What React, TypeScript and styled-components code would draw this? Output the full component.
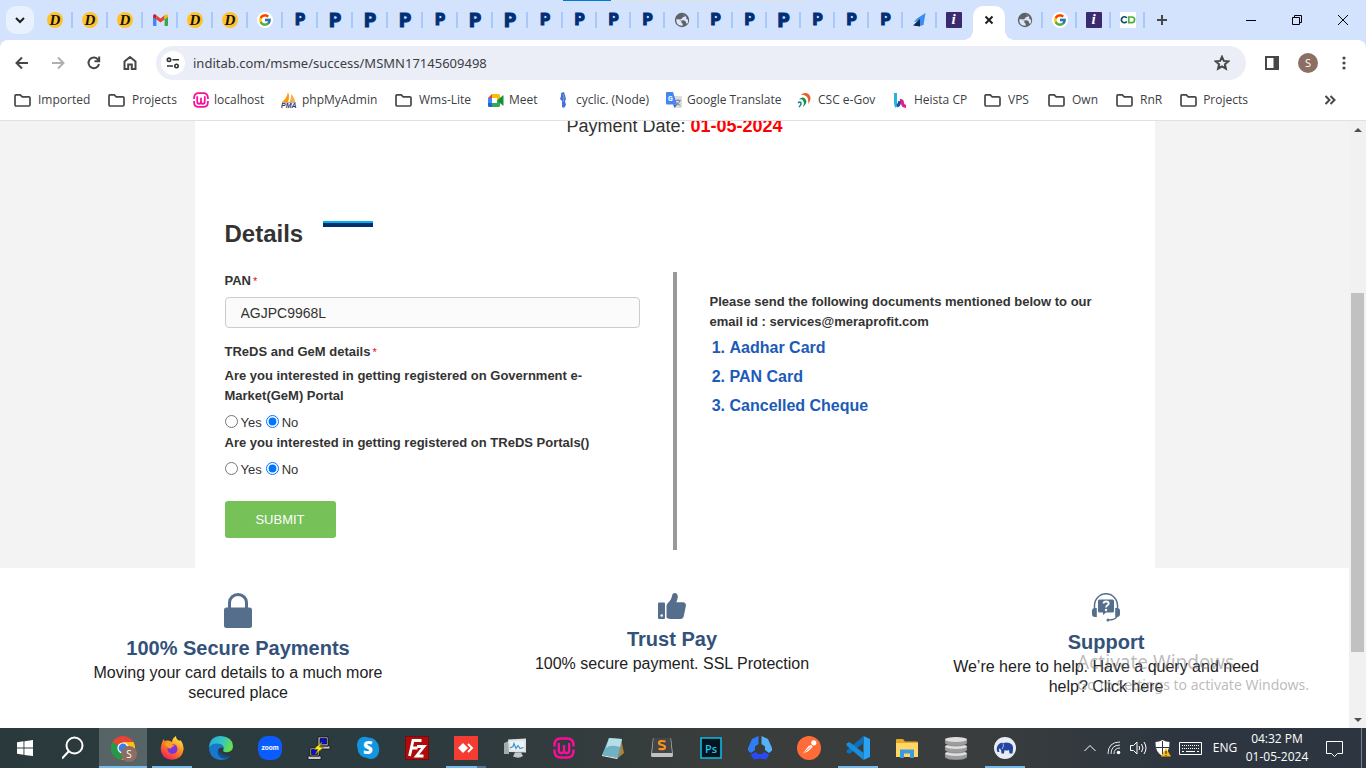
import React from "react";
import styled, { createGlobalStyle, css } from "styled-components";
import { FcGoogle } from "react-icons/fc";

const ui = `"Open Sans", "Noto Sans", sans-serif`;
const uiWide = `"Noto Sans", "Open Sans", sans-serif`;
const arial = `"Liberation Sans", Arial, sans-serif`;

const GlobalStyle = createGlobalStyle`
  *, *::before, *::after { box-sizing: border-box; }
  body { margin: 0; font-family: ${arial}; color: #333; background: #fff; }
  button { border: 0; padding: 0; background: none; font: inherit; color: inherit; }
  a { color: inherit; text-decoration: none; }
  svg { display: block; flex: none; }
`;

const Screen = styled.div`
  display: flex;
  flex-direction: column;
  height: 100vh;
  overflow: hidden;
  position: relative;
`;

/* ---------- tab strip ---------- */

const TabStrip = styled.header`
  display: flex;
  height: 40px;
  flex: none;
  background: #d3e3fd;
`;

const TabSearch = styled.button`
  width: 28px;
  height: 28px;
  margin: 6px 4px 6px 6px;
  border-radius: 10px;
  background: #e9f1fe;
  display: grid;
  place-items: center;
`;

const TabButton = styled.button<{ $wide?: boolean; $line: boolean }>`
  width: ${(p) => (p.$wide ? 35 : 34)}px;
  flex: none;
  height: 40px;
  padding-right: 1px;
  display: grid;
  place-items: center;
  background: ${(p) =>
    p.$line ? "linear-gradient(#a8c7fa, #a8c7fa) right center / 2px 16px no-repeat" : "none"};
`;

const ActiveTab = styled.div`
  width: 32px;
  flex: none;
  height: 34px;
  margin: 6px 3px 0 2px;
  background: #fff;
  border-radius: 10px 10px 0 0;
  display: grid;
  place-items: center;
  position: relative;
  padding-bottom: 6px;

  &::before,
  &::after {
    content: "";
    position: absolute;
    bottom: 0;
    width: 10px;
    height: 10px;
  }
  &::before {
    right: 100%;
    background: radial-gradient(circle at 0 0, transparent 10px, #fff 10px);
  }
  &::after {
    left: 100%;
    background: radial-gradient(circle at 100% 0, transparent 10px, #fff 10px);
  }
`;

const PLetter = styled.span<{ $big?: boolean }>`
  font: 700 ${(p) => (p.$big ? 19 : 16)}px/20px "Liberation Sans Narrow", "DejaVu Sans Condensed", sans-serif;
  color: #012f77;
  -webkit-text-stroke: 1px #012f77;
`;

const DBadge = styled.span`
  width: 16px;
  height: 16px;
  border-radius: 50%;
  background: #fec32d;
  color: #111;
  font: italic 700 15px/16px "Liberation Serif", serif;
  text-align: center;
`;

const GBadge = styled.span`
  width: 16px;
  height: 16px;
  border-radius: 50%;
  background: #fff;
  display: grid;
  place-items: center;
`;

const IBadge = styled.span`
  width: 16px;
  height: 16px;
  border-radius: 1px;
  background: #3b2a70;
  color: #fff;
  font: italic 700 15px/15px "Liberation Serif", serif;
  text-align: center;
`;

const NewTab = styled.button`
  width: 34px;
  display: grid;
  place-items: center;
`;

const WindowButtons = styled.div`
  display: flex;
  margin-left: auto;
`;

const WindowButton = styled.button`
  width: 46px;
  height: 40px;
  display: grid;
  place-items: center;
`;

const LoadingBar = styled.div`
  position: absolute;
  top: 0;
  left: 563px;
  width: 242px;
  height: 1px;
  background: linear-gradient(90deg, #0078d7 48px, #e2e2e2 48px);
`;

/* ---------- toolbar ---------- */

const BrowserChrome = styled.div`
  flex: none;
  background: #d3e3fd;
`;

const ChromeInner = styled.div`
  background: #fff;
  border-radius: 8px 8px 0 0;
  border-bottom: 1px solid #dfe1e5;
`;

const Toolbar = styled.nav`
  display: flex;
  align-items: center;
  height: 46px;
  padding: 0 4px;
`;

const ToolButton = styled.button`
  width: 36px;
  height: 36px;
  display: grid;
  place-items: center;
`;

const Omnibox = styled.div`
  flex: 1;
  display: flex;
  align-items: center;
  height: 34px;
  margin: 0 8px;
  padding: 0 6px 0 5px;
  border-radius: 17px;
  background: #ebeef7;
`;

const SiteInfo = styled.button`
  width: 24px;
  height: 24px;
  border-radius: 50%;
  background: #fff;
  display: grid;
  place-items: center;
`;

const UrlInput = styled.input`
  flex: 1;
  border: 0;
  outline: 0;
  padding: 0 8px;
  background: transparent;
  color: #3c4043;
  font: 13px/20px ${uiWide};
`;

const Avatar = styled.span`
  width: 20px;
  height: 20px;
  border-radius: 50%;
  background: #8d6e63;
  color: #fff;
  font: 11px/20px ${ui};
  text-align: center;
`;

const BookmarkBar = styled.nav`
  display: flex;
  align-items: center;
  height: 34px;
  padding: 0 30px 6px 14px;
  font: 12px/18px ${ui};
  color: #3c4043;
`;

const Bookmark = styled.a<{ $width: number }>`
  display: flex;
  align-items: center;
  gap: 5px;
  flex: none;
  width: ${(p) => p.$width}px;
  white-space: nowrap;
`;

const BookmarkIcon = styled.span<{ $folder?: boolean }>`
  width: ${(p) => (p.$folder ? 19 : 16)}px;
`;

const Overflow = styled.button`
  margin-left: auto;
`;

/* ---------- page ---------- */

const Viewport = styled.div`
  flex: 1;
  min-height: 0;
  display: flex;
  overflow: hidden;
`;

const Page = styled.main`
  flex: 1;
  background: #f3f3f3;
  overflow: hidden;
`;

const Panel = styled.section`
  max-width: 960px;
  margin: 0 auto;
  padding: 0 30px 18px;
  background: #fff;
`;

const PaymentDate = styled.p`
  margin: 0 0 90px;
  height: 10px;
  font-size: 18px;
  line-height: 10px;
  text-align: center;

  strong {
    color: #f00;
  }
`;

const HeadingRow = styled.div`
  display: flex;
  align-items: flex-start;
  gap: 20px;
`;

const Heading = styled.h2`
  margin: 0 0 25px;
  font-size: 24px;
  line-height: 26px;
`;

const HeadingBar = styled.span`
  width: 50px;
  height: 6px;
  background: #002f6c;
  border-top: 2px solid #00b0f5;
`;

const Columns = styled.div`
  display: grid;
  grid-template-columns: 1fr 4px 1fr;
`;

const Divider = styled.div`
  background: #999;
`;

const Form = styled.form`
  padding: 0 33px 12px 0;
  font-size: 13px;
  line-height: 20px;
`;

const labelText = css`
  display: block;
  font-weight: 700;
  line-height: 18px;
  padding: 0;

  span {
    color: #f00020;
    font-size: 11px;
    line-height: 1;
    font-weight: 400;
    margin-left: 2px;
  }
`;

const Label = styled.label`
  ${labelText}
  margin-bottom: 7px;
`;

const GroupTitle = styled.div`
  ${labelText}
  margin-bottom: 5px;
`;

const TextInput = styled.input`
  display: block;
  width: 100%;
  height: 31px;
  margin-bottom: 15px;
  padding: 0 15px;
  border: 1px solid #ccc;
  border-radius: 4px;
  background: #fbfbfb;
  color: #333;
  font: 14px/20px ${arial};
`;

const Question = styled.fieldset`
  margin: 0;
  padding: 0;
  border: 0;
  min-width: 0;

  legend {
    padding: 0;
    margin-bottom: 7px;
    font-weight: 700;
  }
`;

const Options = styled.div`
  display: flex;
  gap: 4px;
`;

const Option = styled.label`
  display: flex;
  align-items: flex-start;
  gap: 3px;

  input {
    width: 13px;
    height: 13px;
    margin: 2px 0 0;
    accent-color: #0075ff;
  }
`;

const Submit = styled.button`
  display: block;
  width: 111px;
  height: 37px;
  margin-top: 21px;
  border-radius: 3px;
  background: #76c158;
  color: #fff;
  font-size: 13px;
`;

const Documents = styled.div`
  padding: 20px 0 0 33px;
  font-size: 13px;
  font-weight: 700;
  line-height: 20px;

  p {
    margin: 0 0 1px;
  }
  ol {
    margin: 0;
    padding-left: 20px;
    color: #1c5bb8;
    font-size: 16px;
    line-height: 29px;
  }
`;

const Features = styled.section`
  display: grid;
  grid-template-columns: repeat(3, 1fr);
  padding: 25px 26px 40px 21px;
  background: #fff;
`;

const Feature = styled.article`
  display: flex;
  flex-direction: column;
  align-items: center;
  text-align: center;

  h3 {
    margin: 8px 0 3px;
    font-size: 20px;
    line-height: 24px;
    color: #33527a;
  }
  p {
    margin: 0;
    max-width: 330px;
    font-size: 16px;
    line-height: 20px;
    color: #222;
  }
`;

const ScrollTrack = styled.div`
  width: 17px;
  flex: none;
  background: #f1f1f1;
  display: flex;
  flex-direction: column;
  align-items: center;
`;

const ScrollArrow = styled.button`
  width: 17px;
  height: 17px;
  display: grid;
  place-items: center;
`;

const ScrollSpace = styled.div`
  flex: 155;
`;

const ScrollThumb = styled.div`
  flex: 359;
  width: 13px;
  background: #c1c1c1;
`;

const ScrollEnd = styled.div`
  flex: 59;
`;

const Watermark = styled.aside`
  position: absolute;
  right: 57px;
  bottom: 73px;
  color: rgba(130, 130, 130, 0.55);
  font: 14px/20px ${uiWide};
  pointer-events: none;

  div {
    font-size: 19px;
    line-height: 26px;
  }
`;

/* ---------- taskbar ---------- */

const Taskbar = styled.footer`
  display: flex;
  flex: none;
  height: 40px;
  background: linear-gradient(90deg, #2a3a3c 0%, #2c3b3f 30%, #393d3c 52%, #393d3d 72%, #2d3640 86%, #2d3640 100%);
  color: #fff;
`;

const TaskButton = styled.button<{ $state?: "active" | "running" | "stacked" }>`
  width: 49px;
  height: 40px;
  display: grid;
  place-items: center;
  background: ${(p) =>
    p.$state === "active"
      ? "linear-gradient(#76b9ed, #76b9ed) center bottom / 48px 2px no-repeat, linear-gradient(#566466, #566466) center / 48px 100% no-repeat"
      : p.$state === "running"
        ? "linear-gradient(#76b9ed, #76b9ed) center bottom / 40px 2px no-repeat"
        : p.$state === "stacked"
          ? "linear-gradient(90deg, #76b9ed 31px, #56748e 31px) center bottom / 40px 2px no-repeat"
          : "none"};
`;

const Tray = styled.div`
  display: flex;
  align-items: center;
  margin-left: auto;
  font: 12px/18px ${ui};
`;

const TrayButton = styled.button<{ $width?: number }>`
  width: ${(p) => p.$width ?? 24}px;
  height: 40px;
  display: grid;
  place-items: center;
`;

const Clock = styled.button`
  width: 62px;
  height: 40px;
  display: flex;
  flex-direction: column;
  align-items: center;
  justify-content: center;
  white-space: nowrap;
`;

const DesktopEdge = styled.div`
  width: 5px;
  height: 40px;
  border-left: 1px solid #78808a;
`;

/* ---------- icons ---------- */

const Line = ({ size = 16, color = "#474747", width = 2, d }: { size?: number; color?: string; width?: number; d: string }) => (
  <svg width={size} height={size} viewBox={`0 0 ${size} ${size}`} fill="none" stroke={color} strokeWidth={width}>
    <path d={d} />
  </svg>
);

const Gmail = () => (
  <svg width="15" height="12" viewBox="0 0 15 12">
    <path d="M0 2v9q0 1 1 1h2.400V5z" fill="#4285f4" />
    <path d="M15 2v9q0 1-1 1h-2.400V5z" fill="#34a853" />
    <path d="M3.400 1.300 7.500 4.400l4.100-3.100V5.400L7.500 8.500 3.400 5.400z" fill="#ea4335" />
    <path d="M0 2Q0 .2 1.500.2q1 0 1.900 1.100V5.400L0 3z" fill="#c5221f" />
    <path d="M15 2Q15 .2 13.500.2q-1 0-1.900 1.100V5.400L15 3z" fill="#fbbc04" />
  </svg>
);

const Globe = () => (
  <svg width="16" height="16" viewBox="0 0 16 16">
    <circle cx="8" cy="8" r="7.200" fill="#5f6368" />
    <path d="M2.300 7.200h3l2.100 2v1.500l1.300 1v2q-4.700.2-6.200-3.500zM8.600 2.200l1.700.5.8 1.700-2.500.8-.6 1.500-2.200.5 1.400 1.200 2.800-.1 1.900 1.500.2 1.500 1.200.4q1.200-2 .6-4.300l-1.700-.4.2-1.800Q10.800 2.600 8.600 2.200z" fill="#dbe6fb" />
  </svg>
);

const Sail = () => (
  <svg width="13" height="14" viewBox="0 0 13 14">
    <path d="M12.500 0 4 5.500 1 9l6-1 0 5 3.500-1z" fill="#3b8df0" />
    <path d="M0 12.500 7 6v7.500z" fill="#0b2b55" />
  </svg>
);

const Loops = () => (
  <svg width="16" height="16" viewBox="0 0 16 16">
    <path fill="#fff" d="M0 0h16v16H0z" />
    <path d="M6.800 6A3 3 0 1 0 6.800 9.500" fill="none" stroke="#0d4d66" strokeWidth="1.700" />
    <path d="M8.800 5h3a2.800 2.800 0 0 1 0 5.600H8.800z" fill="none" stroke="#4caf3f" strokeWidth="1.700" />
  </svg>
);

const Folder = () => (
  <svg width="17" height="13" viewBox="0 0 17 13" fill="none" stroke="#474747" strokeWidth="1.700">
    <path d="M1 2q0-1.200 1.200-1.200h4l2 2h6.600Q16 2.800 16 4v6.800q0 1.200-1.200 1.200H2.200Q1 12 1 10.800z" />
  </svg>
);

const Wamp = ({ size = 16 }: { size?: number }) => (
  <svg width={size} height={size} viewBox="0 0 22 22" fill="none" stroke="#fb0d9c" strokeWidth="2.400">
    <path d="M1.500 9.500V8Q1.500 1.500 8 1.500h6q6.500 0 6.500 6.500v1.500M1.500 12.500V14q0 6.500 6.500 6.500h6q6.500 0 6.500-6.500v-1.500" />
    <path d="M5.800 6v7q0 3.200 2.600 3.200T11 13V8v5q0 3.200 2.600 3.200t2.600-3.200V6" />
  </svg>
);

const Pma = () => (
  <svg width="17" height="16" viewBox="0 0 17 16">
    <path d="M7 0q2 5 0 10H1Q6 6 7 0z" fill="#f89c0e" />
    <path d="M10 2q4 4 4 8H8.500Q10.500 6 10 2z" fill="#f7b04a" />
    <path d="M1 10.500h14" stroke="#999" strokeWidth=".8" />
    <text x="0" y="15.500" fontFamily="Liberation Sans, sans-serif" fontSize="7" fontWeight="700" fontStyle="italic" fill="#333366">PMA</text>
  </svg>
);

const Meet = () => (
  <svg width="16" height="13" viewBox="0 0 16 13">
    <path d="M0 4 4 0v4z" fill="#ea4335" />
    <path d="M4 0h6.500Q12 0 12 1.500V5L9 6.500V4H4z" fill="#fbbc04" />
    <path d="M0 4h4v5H0z" fill="#4285f4" />
    <path d="M0 9h4v4H1.200Q0 13 0 11.800z" fill="#1967d2" />
    <path d="M4 9h5V6.500L12 8v3.500q0 1.500-1.500 1.500H4z" fill="#34a853" />
    <path d="M9 6.500 14.800 1.500Q15.500 1 15.500 2v9q0 1-.7.500z" fill="#12923c" />
    <path d="M4 4h5v5H4z" fill="#fff" />
  </svg>
);

const Cyclic = () => (
  <svg width="16" height="16" viewBox="0 0 16 16">
    <path d="m6 1 3-1 1 3 1 4-1 2 1 4-2 3-2-1V9L5 7l1-3z" fill="#4b6fd8" />
    <path d="m8 2 1 4-1 4" stroke="#7d99ea" fill="none" />
  </svg>
);

const Translate = () => (
  <svg width="16" height="16" viewBox="0 0 16 16">
    <path d="M6 4h9q1 0 1 1v10q0 1-1 1H9z" fill="#dcdcdc" />
    <path d="M9 8.500h6M12 7v1.500M14 8.500q-1 3.500-4 5M10.500 10q1 2.500 4 3.500" stroke="#7b8b99" fill="none" />
    <path d="M1 0h6l4 12.500H1q-1 0-1-1V1q0-1 1-1z" fill="#4285f4" />
    <path d="m7 12.500 4 0-2.500 3.500z" fill="#3367d6" />
    <text x="2" y="9" fontFamily="Roboto, sans-serif" fontSize="7" fontWeight="700" fill="#fff">G</text>
  </svg>
);

const Csc = () => (
  <svg width="16" height="16" viewBox="0 0 16 16" fill="none">
    <path d="M3.500 3Q8-.5 12 2.500q3.500 4-1 9.500 1-5.500-1.500-7.500Q7 2 3.500 3z" fill="#e8602c" />
    <path d="M2 7.500Q5 4 8 6.500q3.500 4-2.500 9 2.500-4.500.5-7Q4.500 6.500 2 7.500z" fill="#17924b" />
    <path d="M1 11q2-2 3 0 .5 2-2 4" stroke="#0c7f8e" strokeWidth="1.500" />
  </svg>
);

const Heista = () => (
  <svg width="16" height="16" viewBox="0 0 16 16" fill="none" strokeWidth="3">
    <path d="M2.500 1v9q0 3 1 5" stroke="#28b4dc" />
    <path d="M4 14q3-1 2.500-5" stroke="#1d4fb0" />
    <path d="M7 8.500q2.500-.5 2.500 2.500t3.500 3.500" stroke="#e0208a" />
  </svg>
);

const Lock = () => (
  <svg width="28" height="35" viewBox="0 0 28 35">
    <path d="M5.500 16V9.500a8.500 8 0 0 1 17 0V16" fill="none" stroke="#546e8b" strokeWidth="3" />
    <rect y="14.500" width="28" height="20.500" rx="2.500" fill="#546e8b" />
  </svg>
);

const Thumb = () => (
  <svg width="28" height="26" viewBox="0 0 28 26">
    <path d="M1 9.500h5q1 0 1 1V25q0 1-1 1H1q-1 0-1-1V10.500q0-1 1-1z" fill="#546e8b" />
    <circle cx="3.700" cy="22.500" r="1.300" fill="#fff" />
    <path d="M8.500 13q0-1.500 1-2.500 4-4 4.500-7.500Q14.500 0 16.500 0q3.300.2 3.300 4 0 2-1.500 5.200H25.500q2.500.4 2.500 3L25.800 23q-.6 3-3.300 3H13q-2.800 0-4.500-1.500z" fill="#546e8b" />
  </svg>
);

const Headset = () => (
  <svg width="28" height="29" viewBox="0 0 28 29">
    <path d="M2.500 17V12.500a11.500 11.800 0 0 1 23 0V17" fill="none" stroke="#546e8b" strokeWidth="1.500" />
    <path d="M4.800 15v9H3q-3 0-3-3v-3q0-3 3-3zM23.200 15v9H25q3 0 3-3v-3q0-3-3-3z" fill="#546e8b" />
    <path d="M25 23q-1 4-9 4" fill="none" stroke="#546e8b" strokeWidth="1.200" />
    <circle cx="16" cy="27" r="1.500" fill="#546e8b" />
    <path d="M7.500 6.500h13q1.500 0 1.500 1.500v10q0 1.500-1.500 1.500H14L11 22v-2.500H7.500Q6 19.500 6 18V8q0-1.500 1.500-1.500z" fill="#546e8b" />
    <path d="M11.500 10.500q0-2 2.600-2t2.600 2q0 1-1.300 1.800T14 14.500" fill="none" stroke="#fff" strokeWidth="1.800" />
    <circle cx="14" cy="17" r="1.200" fill="#fff" />
  </svg>
);

const Windows = () => (
  <svg width="16" height="16" viewBox="0 0 16 16" fill="#fff">
    <path d="M0 2.300 6.500 1.300V7.600H0zM7.400 1.200 16 0V7.600H7.400zM0 8.500H6.500V14.800L0 13.800zM7.400 8.500H16V16L7.400 14.900z" />
  </svg>
);

const Search = () => (
  <svg width="24" height="24" viewBox="0 0 24 24" fill="none" stroke="#fff" strokeWidth="2">
    <circle cx="12.500" cy="9.500" r="8" />
    <path d="M6.800 15.200 0 22.500" />
  </svg>
);

const Chrome = () => (
  <svg width="24" height="24" viewBox="0 0 24 24" overflow="visible">
    <circle cx="12" cy="12" r="12" fill="#ea4335" />
    <path d="M12 12 1.600 6A12 12 0 0 0 11 24z" fill="#25994a" />
    <path d="M12 6H22.400A12 12 0 0 1 11 24L17 15z" fill="#fbc116" />
    <circle cx="12" cy="12" r="5.600" fill="#fff" />
    <circle cx="12" cy="12" r="4.400" fill="#3b7de9" />
    <circle cx="18" cy="18" r="8" fill="#8d6e63" />
    <text x="18" y="22" textAnchor="middle" fontFamily="Open Sans, sans-serif" fontSize="10" fill="#fff">S</text>
  </svg>
);

const Firefox = () => (
  <svg width="24" height="24" viewBox="0 0 24 24">
    <defs>
      <linearGradient id="ff" x1=".8" y1="0" x2=".2" y2="1">
        <stop offset="0" stopColor="#fff04a" />
        <stop offset=".45" stopColor="#ff8a1e" />
        <stop offset="1" stopColor="#f0185f" />
      </linearGradient>
    </defs>
    <path d="M2 7Q2.500 4.500 4 3l.5 2.500Q5.500 4 8 4.500 10 4.500 12 6q.2-4 4-6 0 3 3 4.500Q20.500 5 20.500 4q3.500 5 3 10-1.500 9.500-11.500 9.800Q1 23 .7 12.500 1 9 2 7z" fill="url(#ff)" />
    <circle cx="12.500" cy="13" r="5" fill="#7b35d8" />
    <path d="M5 8q3-2 6 0 3 .2 3.500 2-3 .2-3.500 2.500Q8 12.500 7.500 11 6 10 5 8z" fill="#ff9a22" />
  </svg>
);

const Edge = () => (
  <svg width="24" height="24" viewBox="0 0 24 24">
    <defs>
      <linearGradient id="ed" x1="0" y1="0" x2="1" y2=".3">
        <stop offset="0" stopColor="#2aa6e0" />
        <stop offset=".6" stopColor="#36c6c0" />
        <stop offset="1" stopColor="#63df50" />
      </linearGradient>
    </defs>
    <path d="M0 12Q.5 0 12 0q11.500.8 12 10 0 6-6.500 6.200-4.500-.2-3-2.700Q15.500 9 10 8 3 7.500 0 12z" fill="url(#ed)" />
    <path d="M0 12q3-5 9.500-4.300 5 .8 5.200 4.500Q11 10 9 14q-1.500 6 5 8.300 4 .7 7.500-2.300Q18 24 12 24 1 23.500 0 12z" fill="#1778cc" />
    <path d="M9 14q-1 6 5.500 8 4 .5 7-2.500-8 2-12.500-5.500z" fill="#0d4f9c" />
  </svg>
);

const Zoom = () => (
  <svg width="24" height="24" viewBox="0 0 24 24">
    <rect width="24" height="24" rx="9.500" fill="#0b5cff" />
    <text x="12" y="14" textAnchor="middle" fontFamily="Inter, sans-serif" fontSize="6.500" fontWeight="700" fill="#fff">zoom</text>
  </svg>
);

const Putty = () => (
  <svg width="24" height="24" viewBox="0 0 24 24" stroke="#111" strokeWidth=".8">
    <path d="M11 1h10v9H11zM9 10h14v3H9zM3 12h9v8H3zM1 20h13v3.500H1z" fill="#c8c8c8" />
    <path d="M13 2.500h6.500v5.500H13zM4.500 13.500h6v5h-6z" fill="#0a0ae0" />
    <path d="m15 6-8 7 4 .5L8.500 18l8-6.500-4-.5z" fill="#ffee22" stroke="#887700" />
  </svg>
);

const Skype = () => (
  <svg width="24" height="24" viewBox="0 0 24 24">
    <path d="M7 1q3-.5 5 .5Q22 2 23 12q.5 1.500 0 4-1.500 6.500-8 7-2 0-4-1Q2 21 1.500 12 .5 9 1.500 6 3 1.500 7 1z" fill="#1296df" />
    <text x="12" y="18" textAnchor="middle" fontFamily="Open Sans, sans-serif" fontSize="17" fontWeight="800" fill="#fff">S</text>
  </svg>
);

const Filezilla = () => (
  <svg width="24" height="24" viewBox="0 0 24 24">
    <path fill="#b10a0a" stroke="#7f0000" strokeDasharray="2 1" d="M.5.5h23v23H.5z" />
    <path d="M4.500 20 8 4.500h8.500M6.500 12h6M12 10.500h7L11.500 20h7" fill="none" stroke="#fff" strokeWidth="2.800" />
  </svg>
);

const AnyDesk = () => (
  <svg width="24" height="24" viewBox="0 0 24 24">
    <path fill="#f43c32" d="M0 0h24v24H0z" />
    <path d="m9 7 5 5-5 5-5-5z" fill="#fff" />
    <path d="m14 8 4 4-4 4" fill="none" stroke="#fff" strokeWidth="2" />
  </svg>
);

const Monitor = () => (
  <svg width="24" height="24" viewBox="0 0 24 24">
    <path d="M1 7l5-2v13H1z" fill="#a4abad" />
    <path d="M5 3.500 23 2.500v14l-17-.5z" fill="#dfe3e4" />
    <path d="M7 5.500 21 4.500v10L7.500 14z" fill="#e8f3fa" />
    <path d="m7 12 3-1.500 1-3 2 5 2-3 2 3 3.500-1" fill="none" stroke="#4a90c0" strokeWidth="1.200" />
    <path d="M12 16.500h6l2 3.500q-4 3-10 .5z" fill="#c3c8ca" />
  </svg>
);

const Notepad = () => (
  <svg width="24" height="24" viewBox="0 0 24 24">
    <path d="m20 3 3 14-6 5z" fill="#a98545" />
    <path d="M8 2 21 3 17 22 1 19z" fill="#6fb3c2" />
    <path d="M8 2 21 3 19 11Q9 8 5 12z" fill="#b5dfe7" />
    <path d="m1 19 16 3-1 1L1 20z" fill="#e8eeee" />
  </svg>
);

const Sublime = () => (
  <svg width="24" height="24" viewBox="0 0 24 24">
    <path d="M3 2h18l2 17q0 2-1 2H2q-1 0-1-2z" fill="#c2c2c2" />
    <path d="M3.500 2h17l1.500 15H2z" fill="#454545" />
    <path d="M15.500 5.500Q9 4 9 6.800q0 1.700 3 2.200t3 2.200q0 3-6.500 1.500" fill="none" stroke="#f8941e" strokeWidth="2.200" />
  </svg>
);

const Photoshop = () => (
  <svg width="22" height="22" viewBox="0 0 22 22">
    <path d="M1 1h20v20H1z" fill="#04141c" stroke="#0cb9e5" strokeWidth="1.600" />
    <text x="11" y="15.500" textAnchor="middle" fontFamily="Open Sans, sans-serif" fontSize="11" fontWeight="600" fill="#19c5f0">Ps</text>
  </svg>
);

const TriRing = () => (
  <svg width="24" height="24" viewBox="0 0 24 24">
    <path d="M10.500 0v8L7 10.500V14l-4 3-3-2.500V12L4 3z" fill="#2f7df6" />
    <path d="M13.500 0v8l3.500 2.500V14l4 3 3-2.500V12L20 3z" fill="#55b1fa" />
    <path d="m2.500 18.500 5-2.500 3 2h3l3-2 5 2.500L18 23.500l-6-1-6 1z" fill="#2a49f5" />
  </svg>
);

const Postman = () => (
  <svg width="24" height="24" viewBox="0 0 24 24">
    <circle cx="12" cy="12" r="12" fill="#ff6c37" />
    <circle cx="16.800" cy="6.800" r="2.600" fill="#fff" />
    <path d="m5.500 18 6-8 3-1 1 2-4 4z" fill="#fff" />
    <path d="m5.500 18 8-7" stroke="#ff6c37" strokeWidth=".8" />
  </svg>
);

const VsCode = () => (
  <svg width="24" height="24" viewBox="0 0 24 24">
    <path d="M17.500 0 24 3v18l-6.500 3z" fill="#29a3f2" />
    <path d="M17.500 0v7L3.500 18 .5 16.500v-2z" fill="#0f6fb8" />
    <path d="M17.500 24v-7L3.500 6 .5 7.500v2z" fill="#1a8ddb" />
  </svg>
);

const Explorer = () => (
  <svg width="22" height="19" viewBox="0 0 22 19">
    <path d="M0 1q0-1 1-1h6l2 2.500h12q1 0 1 1V18H0z" fill="#e8a922" />
    <path d="M0 4h22v14H0z" fill="#ffd667" />
    <path d="M4 10.500h14V19h-4v-4.500H8V19H4z" fill="#3a9be0" />
  </svg>
);

const Database = () => (
  <svg width="24" height="24" viewBox="0 0 24 24">
    {[15, 8, 1].map((y) => (
      <g key={y}>
        <path d={`M1 ${y + 2.500}v4q3 2.500 11 2.500t11-2.500v-4z`} fill="#9d9d9d" stroke="#555" strokeWidth=".4" />
        <ellipse cx="12" cy={y + 2.500} rx="11" ry="2.500" fill="#dedede" />
      </g>
    ))}
  </svg>
);

const Elephant = () => (
  <svg width="24" height="24" viewBox="0 0 24 24">
    <circle cx="12" cy="12" r="11" fill="#e7edf3" />
    <path d="M4.500 16q-2-4 1-7.500 2-2.500 5-1.500 3-1 6 0 4 1.500 3.500 6l-.5 4.500h-3l-.5-3.500q-2.500 1-4.500 0l-.5 3.500H8.500L8 13.500q-1.500 0-2-1.500-.5 2 .5 4z" fill="#2344a0" />
    <path d="M10 7.500q1.500 2.500-1 5.500" stroke="#e7edf3" fill="none" strokeWidth=".7" />
  </svg>
);

const Wifi = () => (
  <svg width="14" height="14" viewBox="0 0 14 14" fill="none" stroke="#e4e7ea">
    <path d="M1 13Q1 1 13 1M4 13q0-9 9-9M7 13q0-6 6-6" strokeWidth="1" />
    <circle cx="11.500" cy="11.500" r="1.800" fill="#fff" stroke="none" />
  </svg>
);

const Speaker = () => (
  <svg width="17" height="14" viewBox="0 0 17 14" fill="none" stroke="#fff">
    <path d="M.5 4.500h3L7 1v12L3.500 9.500h-3zM9 5q1.500 2 0 4M11.500 3q3 4 0 8M14 1q4 6 0 12" />
  </svg>
);

const Shield = () => (
  <svg width="16" height="17" viewBox="0 0 16 17">
    <path d="M7.500 0Q11 2 14.500 2q.5 10-7 14Q0 12 .5 2 4 2 7.500 0z" fill="#fff" />
    <path d="M7.500 1v15M1 7.500h13" stroke="#2d3640" />
    <path d="m11 8 5 8.500H6z" fill="#fdb913" />
    <path d="M11 11v3M11 15v1" stroke="#222" />
  </svg>
);

const Keyboard = () => (
  <svg width="23" height="13" viewBox="0 0 23 13" fill="none" stroke="#fff">
    <path d="M.5.500h22v12H.5z" />
    <path d="M3 3.500h17M3 6.500h17" strokeDasharray="1 1" />
    <path d="M3 9.500h2M7 9.500h9M18 9.500h2" />
  </svg>
);

/* ---------- data ---------- */

type Fav = "D" | "M" | "G" | "p" | "P" | "O" | "S" | "i" | "c";

const favicons: Record<Fav, { title: string; icon: React.ReactNode }> = {
  D: { title: "Dashboard", icon: <DBadge>D</DBadge> },
  M: { title: "Gmail", icon: <Gmail /> },
  G: { title: "Google", icon: <GBadge><FcGoogle size={14} /></GBadge> },
  p: { title: "Profit", icon: <PLetter>P</PLetter> },
  P: { title: "Profit", icon: <PLetter $big>P</PLetter> },
  O: { title: "Site", icon: <Globe /> },
  S: { title: "Sail", icon: <Sail /> },
  i: { title: "Inditab", icon: <IBadge>i</IBadge> },
  c: { title: "Cyclic", icon: <Loops /> },
};

const wideTabs = [..."DDDMDDGpPPPpPPp"] as Fav[];
const narrowTabs = [..."pppOppPpppSi"] as Fav[];
const lastTabs = [..."OGic"] as Fav[];

const bookmarks: { name: string; width: number; icon?: React.ReactNode }[] = [
  { name: "Imported", width: 94 },
  { name: "Projects", width: 85 },
  { name: "localhost", width: 88, icon: <Wamp /> },
  { name: "phpMyAdmin", width: 114, icon: <Pma /> },
  { name: "Wms-Lite", width: 93 },
  { name: "Meet", width: 67, icon: <Meet /> },
  { name: "cyclic. (Node)", width: 111, icon: <Cyclic /> },
  { name: "Google Translate", width: 131, icon: <Translate /> },
  { name: "CSC e-Gov", width: 96, icon: <Csc /> },
  { name: "Heista CP", width: 91, icon: <Heista /> },
  { name: "VPS", width: 64 },
  { name: "Own", width: 68 },
  { name: "RnR", width: 64 },
  { name: "Projects", width: 68 },
];

const apps: { name: string; icon: React.ReactNode; state?: "active" | "running" | "stacked" }[] = [
  { name: "Start", icon: <Windows /> },
  { name: "Search", icon: <Search /> },
  { name: "Chrome", icon: <Chrome />, state: "active" },
  { name: "Firefox", icon: <Firefox />, state: "running" },
  { name: "Edge", icon: <Edge /> },
  { name: "Zoom", icon: <Zoom /> },
  { name: "PuTTY", icon: <Putty /> },
  { name: "Skype", icon: <Skype /> },
  { name: "FileZilla", icon: <Filezilla /> },
  { name: "AnyDesk", icon: <AnyDesk />, state: "stacked" },
  { name: "Resource Monitor", icon: <Monitor /> },
  { name: "WampServer", icon: <Wamp size={22} /> },
  { name: "Notepad", icon: <Notepad /> },
  { name: "Sublime Text", icon: <Sublime /> },
  { name: "Photoshop", icon: <Photoshop /> },
  { name: "Webhooks", icon: <TriRing /> },
  { name: "Postman", icon: <Postman /> },
  { name: "Visual Studio Code", icon: <VsCode />, state: "running" },
  { name: "File Explorer", icon: <Explorer /> },
  { name: "Database", icon: <Database /> },
  { name: "pgAdmin", icon: <Elephant />, state: "running" },
];

const YesNo = ({ name, question }: { name: string; question: string }) => (
  <Question>
    <legend>{question}</legend>
    <Options>
      <Option>
        <input type="radio" name={name} value="yes" />
        Yes
      </Option>
      <Option>
        <input type="radio" name={name} value="no" defaultChecked />
        No
      </Option>
    </Options>
  </Question>
);

const Tab = ({ kind, wide, line = true }: { kind: Fav; wide?: boolean; line?: boolean }) => (
  <TabButton $wide={wide} $line={line} aria-label={favicons[kind].title}>
    {favicons[kind].icon}
  </TabButton>
);

export default function App() {
  return (
    <Screen>
      <GlobalStyle />
      <TabStrip>
        <TabSearch aria-label="Search tabs">
          <Line size={10} width={2} color="#1f1f1f" d="m1 3 4 4 4-4" />
        </TabSearch>
        {wideTabs.map((k, i) => <Tab key={i} kind={k} wide />)}
        {narrowTabs.map((k, i) => <Tab key={i} kind={k} line={i < narrowTabs.length - 1} />)}
        <ActiveTab>
          <button aria-label="Close tab">
            <Line size={10} color="#1f1f1f" d="m1.500 1.500 7 7M8.500 1.500l-7 7" width={2} />
          </button>
        </ActiveTab>
        {lastTabs.map((k, i) => <Tab key={i} kind={k} wide={i === 0} />)}
        <NewTab aria-label="New tab">
          <Line size={12} d="M6 1v10M1 6h10" />
        </NewTab>
        <WindowButtons>
          <WindowButton aria-label="Minimise">
            <Line size={10} width={1} color="#000" d="M0 5.500h10" />
          </WindowButton>
          <WindowButton aria-label="Restore">
            <Line size={10} width={1} color="#000" d="M.5 2.500h7v7h-7zM2.500 2.500v-2h7v7h-2" />
          </WindowButton>
          <WindowButton aria-label="Close">
            <Line size={10} width={1} color="#000" d="m0 0 10 10M10 0 0 10" />
          </WindowButton>
        </WindowButtons>
      </TabStrip>

      <BrowserChrome>
        <ChromeInner>
          <Toolbar>
            <ToolButton aria-label="Back"><Line d="M14 8H3M8 2.500 2.500 8 8 13.500" /></ToolButton>
            <ToolButton aria-label="Forward"><Line color="#b0b0b0" d="M2 8h11M8 2.500 13.500 8 8 13.500" /></ToolButton>
            <ToolButton aria-label="Reload">
              <Line d="M13 9A5.300 5.300 0 1 1 11.800 4.300L13 5.500M13.200 1.500v4.700H8.500" />
            </ToolButton>
            <ToolButton aria-label="Home">
              <Line d="M2.500 14V6.500L8 2l5.500 4.500V14H9.800V9.500H6.200V14z" />
            </ToolButton>
            <Omnibox>
              <SiteInfo aria-label="Site information">
                <svg width="14" height="12" viewBox="0 0 14 12" fill="none" stroke="#333" strokeWidth="1.600">
                  <circle cx="3" cy="2.800" r="1.700" />
                  <circle cx="10.500" cy="9" r="1.700" />
                  <path d="M6.500 2.800H13M1 9h6" />
                </svg>
              </SiteInfo>
              <UrlInput aria-label="Address" defaultValue="inditab.com/msme/success/MSMN17145609498" />
              <ToolButton aria-label="Bookmark this page">
                <Line width={2} d="m8 1.800 1.800 4.100 4.500.4-3.400 3 1 4.400L8 11.300l-3.900 2.400 1-4.400-3.400-3 4.500-.4z" />
              </ToolButton>
            </Omnibox>
            <ToolButton aria-label="Side panel">
              <svg width="14" height="14" viewBox="0 0 14 14">
                <path d="M1 1h12v12H1z" fill="none" stroke="#474747" strokeWidth="2" />
                <path d="M8.500 1H13v12H8.500z" fill="#474747" />
              </svg>
            </ToolButton>
            <ToolButton aria-label="Profile"><Avatar>S</Avatar></ToolButton>
            <ToolButton aria-label="Menu">
              <svg width="4" height="14" viewBox="0 0 4 14" fill="#474747">
                <circle cx="2" cy="2" r="1.600" />
                <circle cx="2" cy="7" r="1.600" />
                <circle cx="2" cy="12" r="1.600" />
              </svg>
            </ToolButton>
          </Toolbar>
          <BookmarkBar>
            {bookmarks.map((b, i) => (
              <Bookmark key={i} href="#" $width={b.width}>
                <BookmarkIcon $folder={!b.icon}>{b.icon ?? <Folder />}</BookmarkIcon>
                {b.name}
              </Bookmark>
            ))}
            <Overflow aria-label="More bookmarks">
              <Line size={12} width={2} d="m1.500 2 4 4-4 4M6.500 2l4 4-4 4" />
            </Overflow>
          </BookmarkBar>
        </ChromeInner>
      </BrowserChrome>

      <Viewport>
        <Page>
          <Panel>
            <PaymentDate>Payment Date: <strong>01-05-2024</strong></PaymentDate>
            <HeadingRow>
              <Heading>Details</Heading>
              <HeadingBar />
            </HeadingRow>
            <Columns>
              <Form onSubmit={(e) => e.preventDefault()}>
                <Label htmlFor="pan">PAN<span>*</span></Label>
                <TextInput id="pan" defaultValue="AGJPC9968L" />
                <GroupTitle>TReDS and GeM details<span>*</span></GroupTitle>
                <YesNo
                  name="gem"
                  question="Are you interested in getting registered on Government e-Market(GeM) Portal"
                />
                <YesNo name="treds" question="Are you interested in getting registered on TReDS Portals()" />
                <Submit type="submit">SUBMIT</Submit>
              </Form>
              <Divider />
              <Documents>
                <p>Please send the following documents mentioned below to our email id : services@meraprofit.com</p>
                <ol>
                  <li>Aadhar Card</li>
                  <li>PAN Card</li>
                  <li>Cancelled Cheque</li>
                </ol>
              </Documents>
            </Columns>
          </Panel>
          <Features>
            <Feature>
              <Lock />
              <h3>100% Secure Payments</h3>
              <p>Moving your card details to a much more secured place</p>
            </Feature>
            <Feature>
              <Thumb />
              <h3>Trust Pay</h3>
              <p>100% secure payment. SSL Protection</p>
            </Feature>
            <Feature>
              <Headset />
              <h3>Support</h3>
              <p>We’re here to help. Have a query and need help? Click here</p>
            </Feature>
          </Features>
        </Page>
        <ScrollTrack>
          <ScrollArrow aria-label="Scroll up">
            <svg width="8" height="4" viewBox="0 0 8 4"><path d="M0 4 4 0l4 4z" fill="#505050" /></svg>
          </ScrollArrow>
          <ScrollSpace />
          <ScrollThumb />
          <ScrollEnd />
          <ScrollArrow aria-label="Scroll down">
            <svg width="8" height="4" viewBox="0 0 8 4"><path d="M0 0l4 4 4-4z" fill="#505050" /></svg>
          </ScrollArrow>
        </ScrollTrack>
      </Viewport>

      <Taskbar>
        {apps.map((a) => (
          <TaskButton key={a.name} aria-label={a.name} $state={a.state}>{a.icon}</TaskButton>
        ))}
        <Tray>
          <TrayButton aria-label="Show hidden icons">
            <Line size={14} width={1} color="#fff" d="m1.500 10 5.500-5.500 5.500 5.500" />
          </TrayButton>
          <TrayButton aria-label="Network"><Wifi /></TrayButton>
          <TrayButton aria-label="Volume"><Speaker /></TrayButton>
          <TrayButton aria-label="Security" $width={26}><Shield /></TrayButton>
          <TrayButton aria-label="Touch keyboard" $width={28}><Keyboard /></TrayButton>
          <TrayButton $width={42}>ENG</TrayButton>
          <Clock>
            <span>04:32 PM</span>
            <span>01-05-2024</span>
          </Clock>
          <TrayButton aria-label="Notifications" $width={53}>
            <Line size={17} width={1} color="#fff" d="M.5 1.500h16v12h-5l-3 3-3-3h-5z" />
          </TrayButton>
          <DesktopEdge />
        </Tray>
      </Taskbar>

      <Watermark>
        <div>Activate Windows</div>
        Go to Settings to activate Windows.
      </Watermark>
      <LoadingBar />
    </Screen>
  );
}
